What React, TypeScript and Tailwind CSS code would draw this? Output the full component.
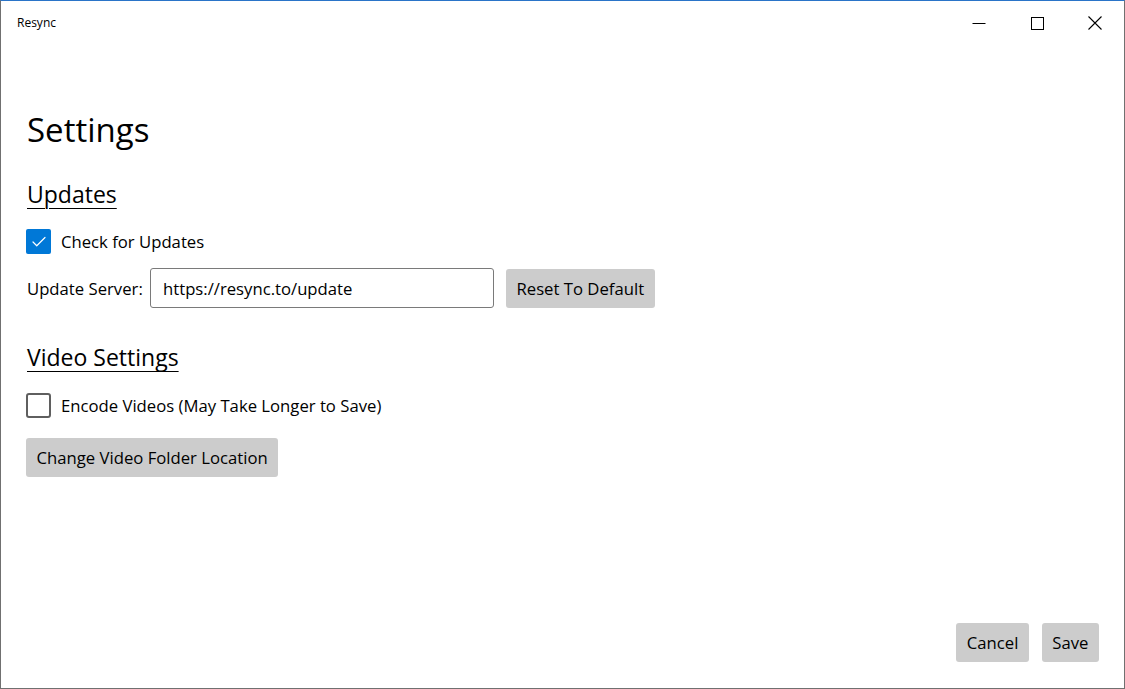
import { Check } from 'lucide-react';

const FONT = { fontFamily: '"Open Sans", "Noto Sans", sans-serif' };

function TitleBar() {
  return (
    <div className="flex h-[44px] items-center justify-between">
      <span className="pl-[16px] text-[12px] text-black">Resync</span>
      <div className="flex h-full">
        <div className="flex w-[58px] items-center justify-center">
          <svg width="14" height="14" viewBox="0 0 14 14">
            <path d="M0.5 7.5h13" stroke="black" strokeWidth="1" />
          </svg>
        </div>
        <div className="flex w-[58px] items-center justify-center">
          <svg width="13" height="13" viewBox="0 0 13 13">
            <rect x="0.5" y="0.5" width="12" height="12" fill="none" stroke="black" strokeWidth="1" />
          </svg>
        </div>
        <div className="flex w-[58px] items-center justify-center">
          <svg width="14" height="14" viewBox="0 0 14 14">
            <path d="M0.5 0.5L13.5 13.5M13.5 0.5L0.5 13.5" stroke="black" strokeWidth="1.1" />
          </svg>
        </div>
      </div>
    </div>
  );
}

function Checkbox({ checked, label }: { checked: boolean; label: string }) {
  return (
    <label className="flex items-center gap-[10px]">
      {checked ? (
        <span className="flex h-[25px] w-[25px] items-center justify-center rounded-[2px] bg-[#0078d7]">
          <Check size={18} strokeWidth={1.6} className="text-white" />
        </span>
      ) : (
        <span className="h-[25px] w-[25px] rounded-[3px] border-2 border-[#5f5f5f] bg-white" />
      )}
      <span className="text-[16.7px] text-black">{label}</span>
    </label>
  );
}

function GrayButton({ children, className = '' }: { children: React.ReactNode; className?: string }) {
  return (
    <button className={`h-[39px] rounded-[3px] bg-[#cccccc] px-[10.5px] text-[16.7px] text-black ${className}`}>
      {children}
    </button>
  );
}

export default function App() {
  return (
    <div
      style={FONT}
      className="flex h-[689px] w-[1125px] flex-col border-x border-b border-t border-x-[#707070] border-b-[#707070] border-t-[#2a74c8] bg-white"
    >
      <TitleBar />

      <div className="flex-1 pl-[25px] pt-[65px]">
        <h1 className="pl-[1px] text-[33px] leading-[40px] text-black">Settings</h1>

        <h2 className="mt-[29px] pl-[1px] text-[23px] leading-[30px] text-black underline underline-offset-[5px] decoration-1">
          Updates
        </h2>

        <div className="mt-[20px]">
          <Checkbox checked label="Check for Updates" />
        </div>

        <div className="mt-[14px] flex items-center">
          <span className="w-[124px] pl-[1px] text-[16.7px] text-black">Update Server:</span>
          <div className="flex h-[40px] w-[344px] items-center rounded-[3px] border border-[#7a7a7a] px-[12px] text-[16.7px] text-black">
            https://resync.to/update
          </div>
          <GrayButton className="ml-[12px]">Reset To Default</GrayButton>
        </div>

        <h2 className="mt-[34px] pl-[1px] text-[23px] leading-[30px] text-black underline underline-offset-[5px] decoration-1">
          Video Settings
        </h2>

        <div className="mt-[21px]">
          <Checkbox checked={false} label="Encode Videos (May Take Longer to Save)" />
        </div>

        <div className="mt-[20px]">
          <GrayButton>Change Video Folder Location</GrayButton>
        </div>
      </div>

      <div className="flex justify-end gap-[13px] pb-[26px] pr-[25px]">
        <GrayButton>Cancel</GrayButton>
        <GrayButton>Save</GrayButton>
      </div>
    </div>
  );
}
